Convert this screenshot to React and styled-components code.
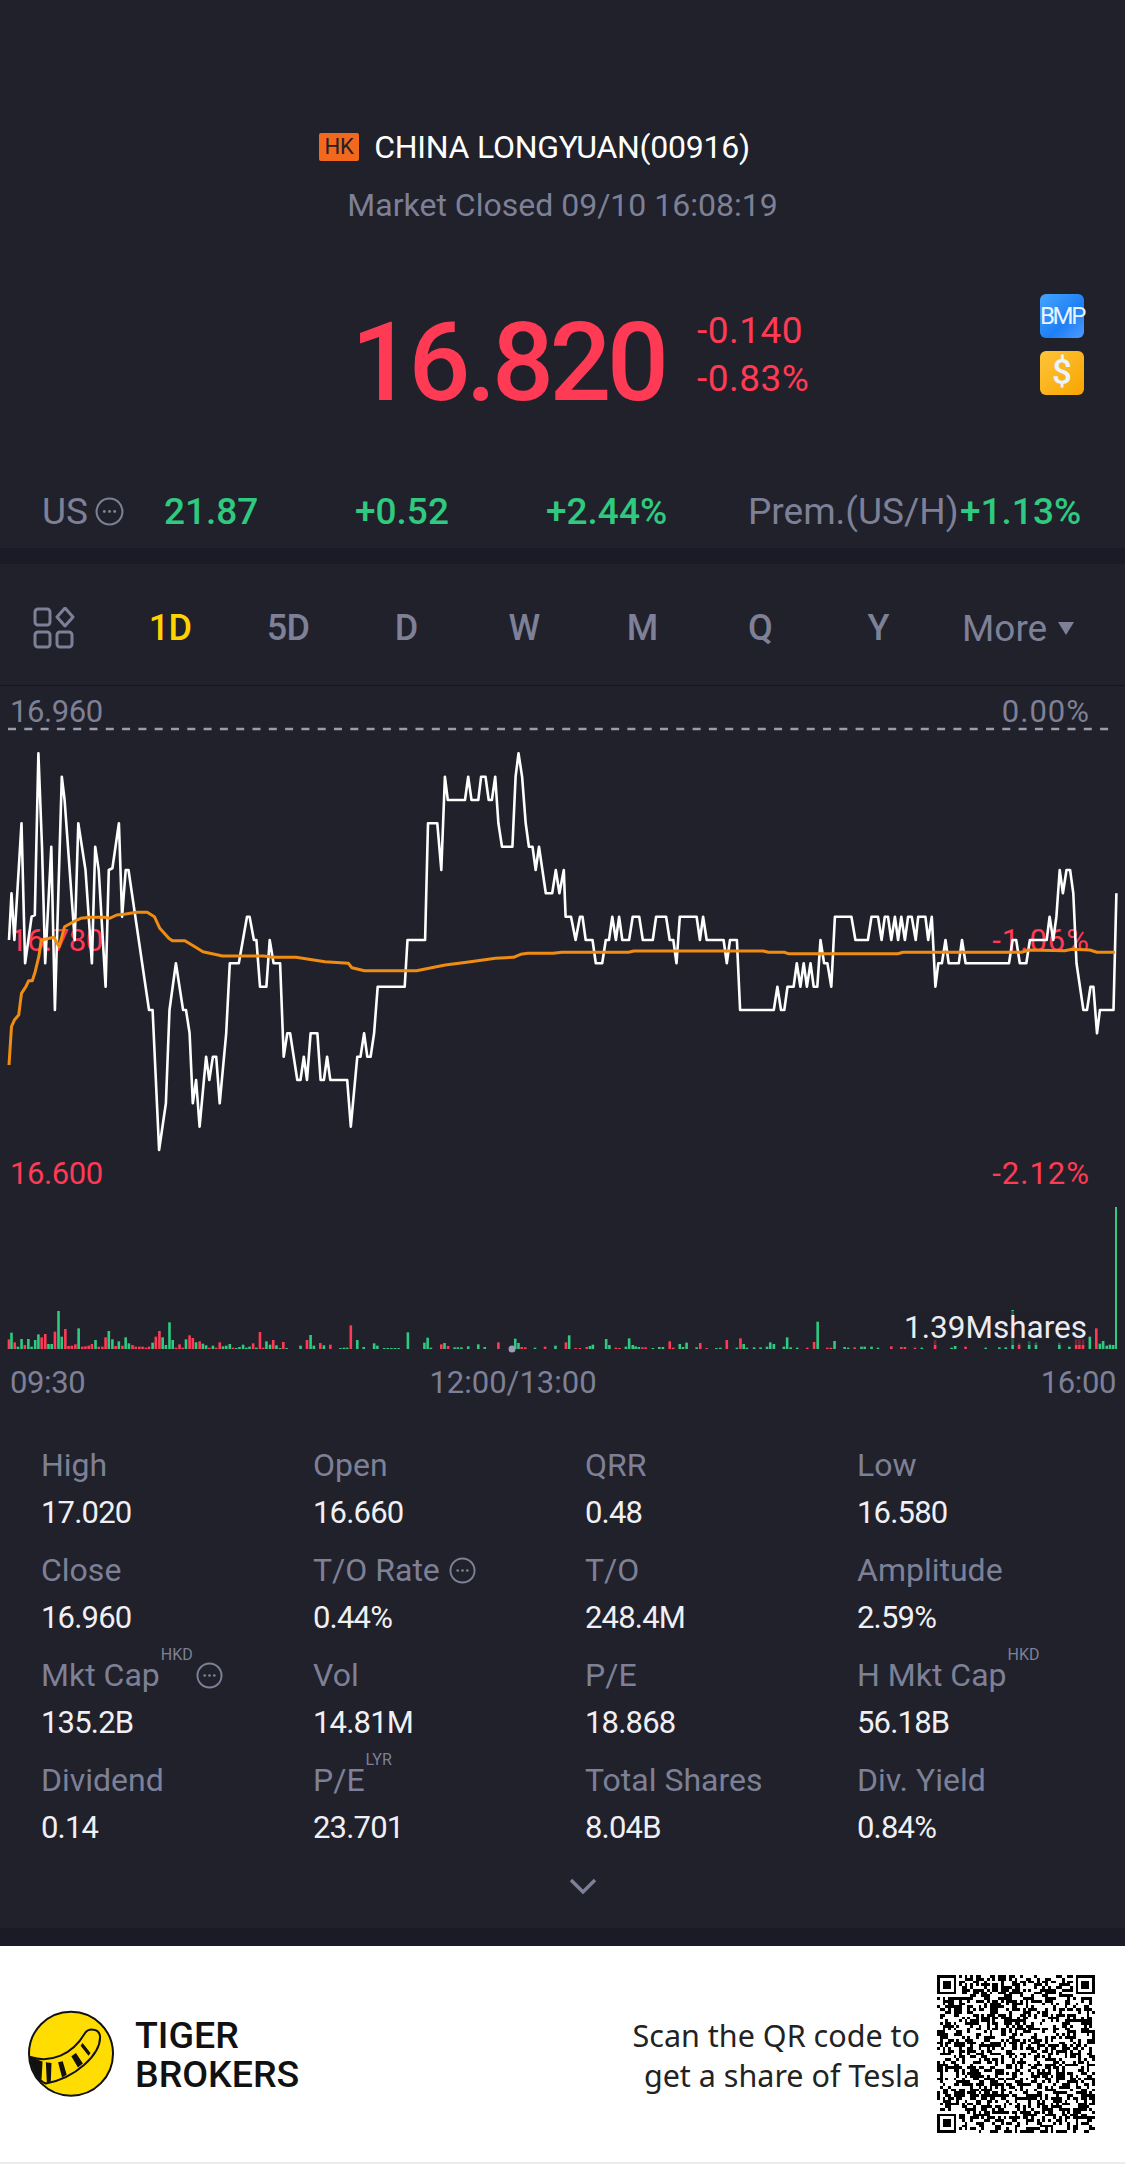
import React from 'react';
import styled, {createGlobalStyle} from 'styled-components';

const GlobalStyle = createGlobalStyle`
  html, body {
    margin: 0;
    padding: 0;
    background: #20212b;
  }
  body {
    font-family: Roboto, "Liberation Sans", sans-serif;
  }
`;

const grey = '#7d8096';
const red = '#ff3a54';
const green = '#2fc97f';

const Page = styled.div`
  width: 1125px;
  height: 2164px;
  overflow: hidden;
  background: #20212b;
  display: flex;
  flex-direction: column;
`;

const Hero = styled.section`
  height: 548px;
  box-sizing: border-box;
  padding-top: 133px;
  display: flex;
  flex-direction: column;
`;

const TitleRow = styled.div`
  display: flex;
  align-items: center;
  justify-content: center;
  gap: 15px;
  height: 28px;
  padding-right: 56px;
`;

const MarketBadge = styled.span`
  width: 40px;
  height: 28px;
  background: #f4681e;
  border-radius: 2px;
  color: #20212b;
  font-size: 22px;
  line-height: 28px;
  text-align: center;
`;

const Title = styled.span`
  color: #fff;
  font-size: 32px;
  letter-spacing: -0.25px;
`;

const Subtitle = styled.div`
  margin-top: 28px;
  height: 32px;
  line-height: 32px;
  color: ${grey};
  font-size: 32px;
  text-align: center;
`;

const PriceRow = styled.div`
  margin-top: 73px;
  height: 138px;
  display: flex;
  align-items: flex-start;
  padding: 0 41px 0 351px;
`;

const Price = styled.div`
  width: 346px;
  color: ${red};
  font-size: 109px;
  font-weight: 500;
  letter-spacing: -4.4px;
  line-height: 138px;
`;

const Change = styled.div`
  margin-top: 20px;
  display: flex;
  flex-direction: column;
  gap: 14px;
  color: ${red};
  font-size: 37px;
  line-height: 34px;
  letter-spacing: 0.5px;
`;

const Flags = styled.div`
  margin-left: auto;
  display: flex;
  flex-direction: column;
  gap: 13px;
`;

const Flag = styled.div`
  width: 44px;
  height: 44px;
  border-radius: 6px;
  color: #eaf3ff;
  text-align: center;
  line-height: 44px;
  font-size: ${p => p.$size}px;
  font-weight: ${p => p.$weight};
  letter-spacing: ${p => p.$track}px;
  background: ${p => p.$bg};
`;

const QuoteRow = styled.div`
  margin-top: 58px;
  display: grid;
  grid-template-columns: 122px 191px 191px 202px 212px auto;
  padding-left: 42px;
  height: 36px;
  align-items: center;
  font-size: 37px;
`;

const QuoteLabel = styled.span`
  color: ${grey};
  display: flex;
  align-items: center;
  gap: 7px;
`;

const QuoteValue = styled.span`
  color: ${green};
  font-weight: 500;
`;

const Band = styled.div`
  height: ${p => p.$h}px;
  background: #1a1b26;
`;

const Toolbar = styled.nav`
  height: 122px;
  box-sizing: border-box;
  border-bottom: 1px solid #15161e;
  display: flex;
  align-items: center;
  padding: 7px 0 0 33px;
`;

const Tabs = styled.div`
  margin-left: 36px;
  display: grid;
  grid-template-columns: repeat(7, 118px);
  text-align: center;
`;

const Tab = styled.span`
  color: ${p => (p.$active ? '#ffd300' : grey)};
  font-size: 36px;
  font-weight: 500;
  letter-spacing: -0.8px;
`;

const More = styled.span`
  margin-left: 25px;
  display: flex;
  align-items: center;
  gap: 11px;
  color: ${grey};
  font-size: 37px;
`;

const MoreCaret = styled.i`
  width: 0;
  height: 0;
  border-left: 8px solid transparent;
  border-right: 8px solid transparent;
  border-top: 13px solid ${grey};
`;

const Chart = styled.section`
  position: relative;
  height: 755px;
  box-sizing: border-box;
  padding: 10px 9px 0 10px;
  display: grid;
  grid-template-rows: 229px 233px 209px 32px;
`;

const AxisRow = styled.div`
  display: flex;
  justify-content: space-between;
  height: 32px;
  line-height: 32px;
  color: ${p => p.$color};
  font-size: 31px;
  letter-spacing: -0.4px;
  padding-right: ${p => p.$inset || 0}px;
`;

const Percent = styled.span`
  letter-spacing: 1px;
`;

const MidTime = styled.span`
  margin-right: 100px;
  letter-spacing: 0;
`;

const ChartCanvas = styled.svg`
  position: absolute;
  left: 0;
  top: 0;
  width: 1125px;
  height: 755px;
`;

const VolumeTag = styled.div`
  position: absolute;
  right: 38px;
  top: 625px;
  padding-left: 2px;
  height: 34px;
  line-height: 34px;
  color: #ececf0;
  font-size: 31.5px;
  background: rgba(32, 33, 43, 0.65);
`;

const Stats = styled.section`
  height: 487px;
  box-sizing: border-box;
  padding: 8px 0 0 41px;
  display: flex;
  flex-direction: column;
`;

const StatGrid = styled.div`
  display: grid;
  grid-template-columns: repeat(4, 272px);
  grid-auto-rows: 105px;
`;

const Stat = styled.div`
  display: flex;
  flex-direction: column;
  gap: 16px;
`;

const StatLabel = styled.div`
  height: 32px;
  line-height: 32px;
  display: flex;
  align-items: center;
  color: ${grey};
  font-size: 32px;
  white-space: nowrap;
`;

const StatValue = styled.div`
  height: 32px;
  line-height: 32px;
  color: #f0f0f4;
  font-size: 31px;
  letter-spacing: -0.8px;
`;

const Sup = styled.span`
  align-self: flex-start;
  margin-top: -14px;
  margin-left: 1px;
  font-size: 16px;
  line-height: 20px;
`;

const InfoSlot = styled.span`
  display: flex;
  margin-left: ${p => p.$gap}px;
`;

const Chevron = styled.svg`
  align-self: center;
  margin-top: 9px;
  width: 28px;
  height: 16px;
`;

const Footer = styled.footer`
  height: 218px;
  box-sizing: border-box;
  background: #fff;
  border-bottom: 2px solid #ececec;
  display: flex;
  align-items: center;
  padding: 0 30px 0 27px;
`;

const LogoText = styled.div`
  margin: 2px 0 0 20px;
  color: #111;
  font-size: 37.5px;
  font-weight: 500;
  line-height: 39px;
`;

const Promo = styled.div`
  margin: 2px 17px 0 auto;
  text-align: right;
  color: #222;
  font-family: "Noto Sans", sans-serif;
  font-size: 30.5px;
  line-height: 40px;
`;

// chart points were read off 3x crops, so convert them back to page pixels
const SX = 2.785;
const left = ([x, y]) => [x / SX, y / 3 + 14];
const right = ([x, y]) => [562 + x / SX, y / 3 + 14];
const toLine = (pts) => pts.map(([x, y]) => `${x.toFixed(1)},${y.toFixed(1)}`).join(' ');

const priceLine = [
    ...[[25,720],[32,580],[40,720],[60,370],[70,790],[88,650],[97,645],[107,160],[117,440],[126,790],[143,440],[153,930],[172,230],[180,300],[208,720],[218,370],[238,510],[256,790],[265,440],[275,510],[294,860],[303,510],[313,505],[331,370],[340,650],[350,510],[358,510],[415,930],[425,930],[443,1350],[462,1210],[472,930],[490,790],[510,930],[518,930],[528,1000],[537,1210],[546,1140],[556,1280],[574,1070],[583,1140],[593,1070],[602,1070],[612,1210],[630,1000],[640,790],[665,790],[688,650],[695,650],[707,720],[714,720],[724,860],[742,860],[751,720],[762,790],[780,790],[790,1070],[800,1000],[808,1000],[828,1140],[837,1140],[846,1070],[855,1140],[865,1000],[884,1000],[893,1140],[902,1140],[911,1070],[920,1140],[967,1140],[977,1280],[995,1070],[1004,1070],[1014,1000],[1023,1070],[1032,1070],[1042,1000],[1052,860],[1127,860],[1135,720],[1184,720],[1192,370],[1218,370],[1229,510],[1239,230],[1247,300],[1295,300],[1304,230],[1313,300],[1332,300],[1340,230],[1352,230],[1361,300],[1370,300],[1379,230],[1388,370],[1398,440],[1427,440],[1436,230],[1444,160],[1454,230],[1464,370],[1473,440],[1483,440],[1492,510],[1501,440],[1520,580],[1538,580],[1548,510],[1558,580]].map(left),
    ...[[5,510],[10,650],[25,650],[38,720],[50,650],[57,650],[66,720],[85,720],[94,790],[112,790],[122,720],[131,720],[140,650],[150,720],[159,650],[168,720],[187,720],[197,650],[215,650],[225,720],[253,720],[262,650],[290,650],[300,720],[310,720],[319,790],[328,650],[375,650],[384,720],[393,650],[403,720],[450,720],[459,790],[468,720],[487,720],[496,930],[590,930],[600,860],[610,930],[619,930],[628,860],[645,860],[654,790],[664,860],[673,790],[682,860],[692,790],[701,860],[711,860],[720,720],[730,790],[739,790],[750,860],[760,650],[806,650],[817,720],[852,720],[862,650],[880,650],[890,720],[899,650],[908,650],[917,720],[927,650],[936,720],[945,650],[955,720],[964,650],[974,650],[985,720],[992,650],[1012,650],[1020,720],[1030,650],[1040,860],[1048,790],[1058,790],[1068,720],[1077,790],[1105,790],[1114,720],[1124,790],[1245,790],[1255,720],[1265,720],[1275,790],[1293,790],[1303,720],[1350,720],[1358,650],[1368,720],[1377,650],[1386,510],[1395,580],[1405,510],[1415,510],[1424,580],[1433,790],[1452,930],[1462,930],[1472,860],[1480,860],[1490,1000],[1498,930],[1536,930],[1544,580]].map(right),
];

const avgLine = [
    ...[[25,1095],[32,980],[40,960],[52,945],[60,880],[72,860],[80,842],[90,842],[98,815],[108,770],[115,720],[150,712],[165,740],[180,680],[205,665],[225,655],[250,652],[290,652],[305,655],[325,645],[350,642],[380,637],[410,637],[430,650],[445,685],[470,715],[480,722],[515,722],[545,742],[565,755],[620,768],[735,768],[760,772],[825,772],[860,778],[905,785],[970,790],[980,803],[1015,812],[1160,812],[1240,795],[1300,787],[1380,775],[1430,772],[1450,763],[1470,760],[1540,760]].map(left),
    ...[[0,757],[185,757],[200,753],[560,753],[575,757],[620,757],[630,761],[935,761],[950,757],[1280,757],[1300,750],[1400,752],[1420,748],[1470,750],[1490,757],[1540,757]].map(right),
];

// [x, top, up] volume bars: up=1 green, up=0 red
const volLeft = [[25,478,0],[32,458,1],[41,487,0],[50,500,1],[60,477,1],[69,495,0],[79,477,1],[88,500,1],[98,480,1],[107,463,1],[116,472,0],[126,462,0],[135,492,1],[144,492,1],[153,455,0],[163,393,1],[172,470,1],[182,447,0],[191,498,0],[200,497,0],[210,493,0],[219,445,1],[229,500,0],[238,499,0],[247,497,0],[256,492,0],[266,480,1],[275,500,0],[285,500,0],[294,472,0],[303,453,1],[313,478,1],[322,498,0],[331,484,1],[341,497,0],[350,472,1],[359,490,1],[369,495,0],[378,500,0],[388,500,0],[397,500,0],[406,503,0],[415,500,0],[425,488,1],[434,470,0],[444,453,0],[453,472,1],[462,495,1],[472,427,1],[481,480,1],[490,503,0],[500,493,0],[509,503,0],[518,478,1],[528,466,0],[537,474,0],[546,487,1],[556,484,0],[565,491,1],[574,496,1],[583,503,0],[593,497,1],[602,503,0],[612,487,0],[621,499,1],[630,497,1],[640,492,1],[649,503,0],[658,504,1],[667,501,1],[677,494,1],[686,503,1],[695,500,1],[705,490,0],[714,503,1],[724,456,0],[733,503,0],[742,484,1],[752,494,1],[761,480,0],[770,496,1],[780,504,1],[789,486,0],[798,504,1],[837,497,1],[855,480,0],[865,465,1],[874,497,1],[892,489,0],[902,496,1],[920,494,0],[948,504,1],[958,503,1],[967,503,1],[977,436,0],[995,480,1],[1013,501,1],[1042,490,1],[1051,497,1],[1070,504,1],[1080,504,1],[1090,504,1],[1100,504,1],[1110,504,1],[1136,457,1],[1182,488,1],[1191,473,1],[1200,503,1],[1229,493,0],[1238,489,1],[1248,498,0],[1266,502,1],[1275,502,1],[1285,502,1],[1304,499,1],[1332,493,1],[1350,501,1],[1388,487,0],[1435,476,1],[1444,489,1],[1453,501,0],[1463,502,0],[1490,503,1],[1518,500,0],[1547,497,1]];
const volRight = [[11,487,0],[20,466,1],[38,504,0],[50,504,0],[69,501,0],[78,498,1],[86,494,1],[123,477,1],[132,495,1],[150,503,0],[160,504,0],[178,500,1],[187,475,1],[197,495,1],[205,499,1],[214,501,1],[224,502,0],[233,502,0],[253,504,1],[271,501,1],[281,501,1],[300,484,0],[310,503,0],[328,492,1],[337,501,1],[347,488,1],[375,502,1],[385,489,0],[403,504,0],[430,504,1],[441,503,1],[459,480,0],[487,503,1],[497,475,0],[506,492,1],[515,503,1],[535,502,1],[553,502,1],[571,500,1],[580,487,1],[590,492,1],[618,500,1],[627,472,1],[637,502,1],[655,503,1],[683,503,0],[702,486,0],[712,425,1],[739,503,0],[749,503,0],[759,483,1],[787,501,1],[797,503,1],[815,502,0],[834,500,1],[843,500,1],[862,500,1],[880,503,1],[917,499,0],[945,501,0],[955,501,0],[983,503,0],[1002,503,1],[1039,480,0],[1085,503,1],[1095,498,1],[1124,500,0],[1180,503,1],[1218,502,1],[1236,502,1],[1255,390,1],[1273,490,0],[1301,483,1],[1320,487,1],[1385,488,1],[1413,500,1],[1432,478,0],[1441,478,0],[1451,478,0],[1470,470,1],[1488,445,0],[1498,491,1],[1507,483,1],[1517,497,1],[1526,494,1],[1535,495,1]];

const VolBars = ({bars, toX}) => bars.map(([x, top, up]) => (
    <rect
        key={x}
        x={toX(x) - 1.3}
        y={top / 3 + 494}
        width={2.6}
        height={(507 - top) / 3}
        fill={up ? green : red}
    />
));

const DotsIcon = ({size = 28}) => (
    <svg width={size} height={size} viewBox="0 0 28 28" fill="none">
        <circle cx="14" cy="14" r="12.5" stroke={grey} strokeWidth="2"/>
        <circle cx="9" cy="14" r="1.4" fill={grey}/>
        <circle cx="14" cy="14" r="1.4" fill={grey}/>
        <circle cx="19" cy="14" r="1.4" fill={grey}/>
    </svg>
);

const LayoutIcon = () => (
    <svg width="42" height="42" viewBox="0 0 42 42" fill="none" stroke={grey} strokeWidth="3">
        <rect x="2" y="2" width="15" height="16" rx="3"/>
        <path d="M32 1 L40 10 L32 19 L24 10 Z" strokeLinejoin="round"/>
        <rect x="2" y="25" width="15" height="15" rx="3"/>
        <rect x="24" y="25" width="15" height="15" rx="3"/>
    </svg>
);

const TigerLogo = () => (
    <svg width="88" height="88" viewBox="78 241 266 264">
        <circle cx="211" cy="372" r="127" fill="#ffdd00" stroke="#111" strokeWidth="6"/>
        <path
            d="M88 382 C150 402 215 375 252 312 C262 294 296 294 299 320 C300 375 225 445 135 462 C115 455 95 425 88 382 Z"
            fill="#ffdd00"
            stroke="#111"
            strokeWidth="6"
            strokeLinejoin="round"
        />
        <path
            d="M88 382 L125 396 L122 450 C105 440 95 415 88 382 Z M135 398 L152 400 L150 456 L138 460 Z M172 398 L186 395 L198 436 L184 444 Z M212 380 L226 370 L247 402 L232 414 Z M240 348 L246 340 L270 370 L264 378 Z"
            fill="#111"
        />
    </svg>
);

// stand-in QR code: fixed finder squares and a seeded module pattern
const QR_SIZE = 57;

const qrPath = () => {
    let seed = 916;
    const next = () => {
        seed = (seed * 1103515245 + 12345) & 0x7fffffff;
        return (seed >> 16) & 1;
    };
    const inFinder = (x, y, ox, oy) => x >= ox - 1 && x <= ox + 7 && y >= oy - 1 && y <= oy + 7;
    const finder = (x, y, ox, oy) => {
        const dx = x - ox;
        const dy = y - oy;
        if (dx < 0 || dy < 0 || dx > 6 || dy > 6) return false;
        const ring = dx === 0 || dy === 0 || dx === 6 || dy === 6;
        const core = dx >= 2 && dx <= 4 && dy >= 2 && dy <= 4;
        return ring || core;
    };
    const origins = [[0, 0], [QR_SIZE - 7, 0], [0, QR_SIZE - 7]];
    let d = '';
    for (let y = 0; y < QR_SIZE; y++) {
        for (let x = 0; x < QR_SIZE; x++) {
            const rnd = next();
            const zone = origins.find(([ox, oy]) => inFinder(x, y, ox, oy));
            const on = zone ? finder(x, y, zone[0], zone[1]) : rnd;
            if (on) d += `M${x} ${y}h1v1h-1z`;
        }
    }
    return d;
};

const QrCode = () => (
    <svg width="158" height="158" viewBox={`0 0 ${QR_SIZE} ${QR_SIZE}`} shapeRendering="crispEdges">
        <path d={qrPath()} fill="#000"/>
    </svg>
);

const stats = [
    {label: 'High', value: '17.020'},
    {label: 'Open', value: '16.660'},
    {label: 'QRR', value: '0.48'},
    {label: 'Low', value: '16.580'},
    {label: 'Close', value: '16.960'},
    {label: 'T/O Rate', value: '0.44%', infoGap: 9},
    {label: 'T/O', value: '248.4M'},
    {label: 'Amplitude', value: '2.59%'},
    {label: 'Mkt Cap', sup: 'HKD', value: '135.2B', infoGap: 3},
    {label: 'Vol', value: '14.81M'},
    {label: 'P/E', value: '18.868'},
    {label: 'H Mkt Cap', sup: 'HKD', value: '56.18B'},
    {label: 'Dividend', value: '0.14'},
    {label: 'P/E', sup: 'LYR', value: '23.701'},
    {label: 'Total Shares', value: '8.04B'},
    {label: 'Div. Yield', value: '0.84%'},
];

const tabs = ['1D', '5D', 'D', 'W', 'M', 'Q', 'Y'];

const App = () => {
    return <Page>
        <GlobalStyle/>
        <Hero>
            <TitleRow>
                <MarketBadge>HK</MarketBadge>
                <Title>CHINA LONGYUAN(00916)</Title>
            </TitleRow>
            <Subtitle>Market Closed 09/10 16:08:19</Subtitle>
            <PriceRow>
                <Price>16.820</Price>
                <Change>
                    <span>-0.140</span>
                    <span>-0.83%</span>
                </Change>
                <Flags>
                    <Flag $size={24} $weight={400} $track={-2.4} $bg="linear-gradient(135deg, #45a4ff, #1d7ff5 60%, #4f9bff)">BMP</Flag>
                    <Flag $size={35} $weight={500} $track={0} $bg="linear-gradient(135deg, #ffc53a, #f7a400)">$</Flag>
                </Flags>
            </PriceRow>
            <QuoteRow>
                <QuoteLabel>US<DotsIcon size={29}/></QuoteLabel>
                <QuoteValue>21.87</QuoteValue>
                <QuoteValue>+0.52</QuoteValue>
                <QuoteValue>+2.44%</QuoteValue>
                <QuoteLabel>Prem.(US/H)</QuoteLabel>
                <QuoteValue>+1.13%</QuoteValue>
            </QuoteRow>
        </Hero>
        <Band $h={16}/>
        <Toolbar>
            <LayoutIcon/>
            <Tabs>
                {tabs.map((tab) => <Tab key={tab} $active={tab === '1D'}>{tab}</Tab>)}
            </Tabs>
            <More>More<MoreCaret/></More>
        </Toolbar>
        <Chart>
            <AxisRow $color={grey} $inset={26}><span>16.960</span><Percent>0.00%</Percent></AxisRow>
            <AxisRow $color={red} $inset={26}><span>16.780</span><Percent>-1.06%</Percent></AxisRow>
            <AxisRow $color={red} $inset={26}><span>16.600</span><Percent>-2.12%</Percent></AxisRow>
            <AxisRow $color={grey}><span>09:30</span><MidTime>12:00/13:00</MidTime><span>16:00</span></AxisRow>
            <ChartCanvas viewBox="0 0 1125 755">
                <line x1="8" y1="43" x2="1110" y2="43" stroke="#9a9cad" strokeWidth="2.5" strokeDasharray="8 8.3"/>
                <VolBars bars={volLeft} toX={(x) => x / SX}/>
                <VolBars bars={volRight} toX={(x) => 562 + x / SX}/>
                <rect x="1115" y="521" width="2" height="142" fill={green}/>
                <circle cx="512" cy="663" r="3.5" fill="#9a9cb2"/>
                <polyline points={toLine(priceLine)} fill="none" stroke="#fff" strokeWidth="2.6" strokeLinejoin="round"/>
                <polyline points={toLine(avgLine)} fill="none" stroke="#f08c12" strokeWidth="3" strokeLinejoin="round"/>
            </ChartCanvas>
            <VolumeTag>1.39Mshares</VolumeTag>
        </Chart>
        <Stats>
            <StatGrid>
                {stats.map((stat, i) => (
                    <Stat key={i}>
                        <StatLabel>
                            {stat.label}
                            {stat.sup && <Sup>{stat.sup}</Sup>}
                            {stat.infoGap && <InfoSlot $gap={stat.infoGap}><DotsIcon size={27}/></InfoSlot>}
                        </StatLabel>
                        <StatValue>{stat.value}</StatValue>
                    </Stat>
                ))}
            </StatGrid>
            <Chevron viewBox="0 0 28 16" fill="none">
                <path d="M2 2 L14 14 L26 2" stroke={grey} strokeWidth="3.4"/>
            </Chevron>
        </Stats>
        <Band $h={18}/>
        <Footer>
            <TigerLogo/>
            <LogoText>TIGER<br/>BROKERS</LogoText>
            <Promo>Scan the QR code to<br/>get a share of Tesla</Promo>
            <QrCode/>
        </Footer>
    </Page>
}

export default App;
